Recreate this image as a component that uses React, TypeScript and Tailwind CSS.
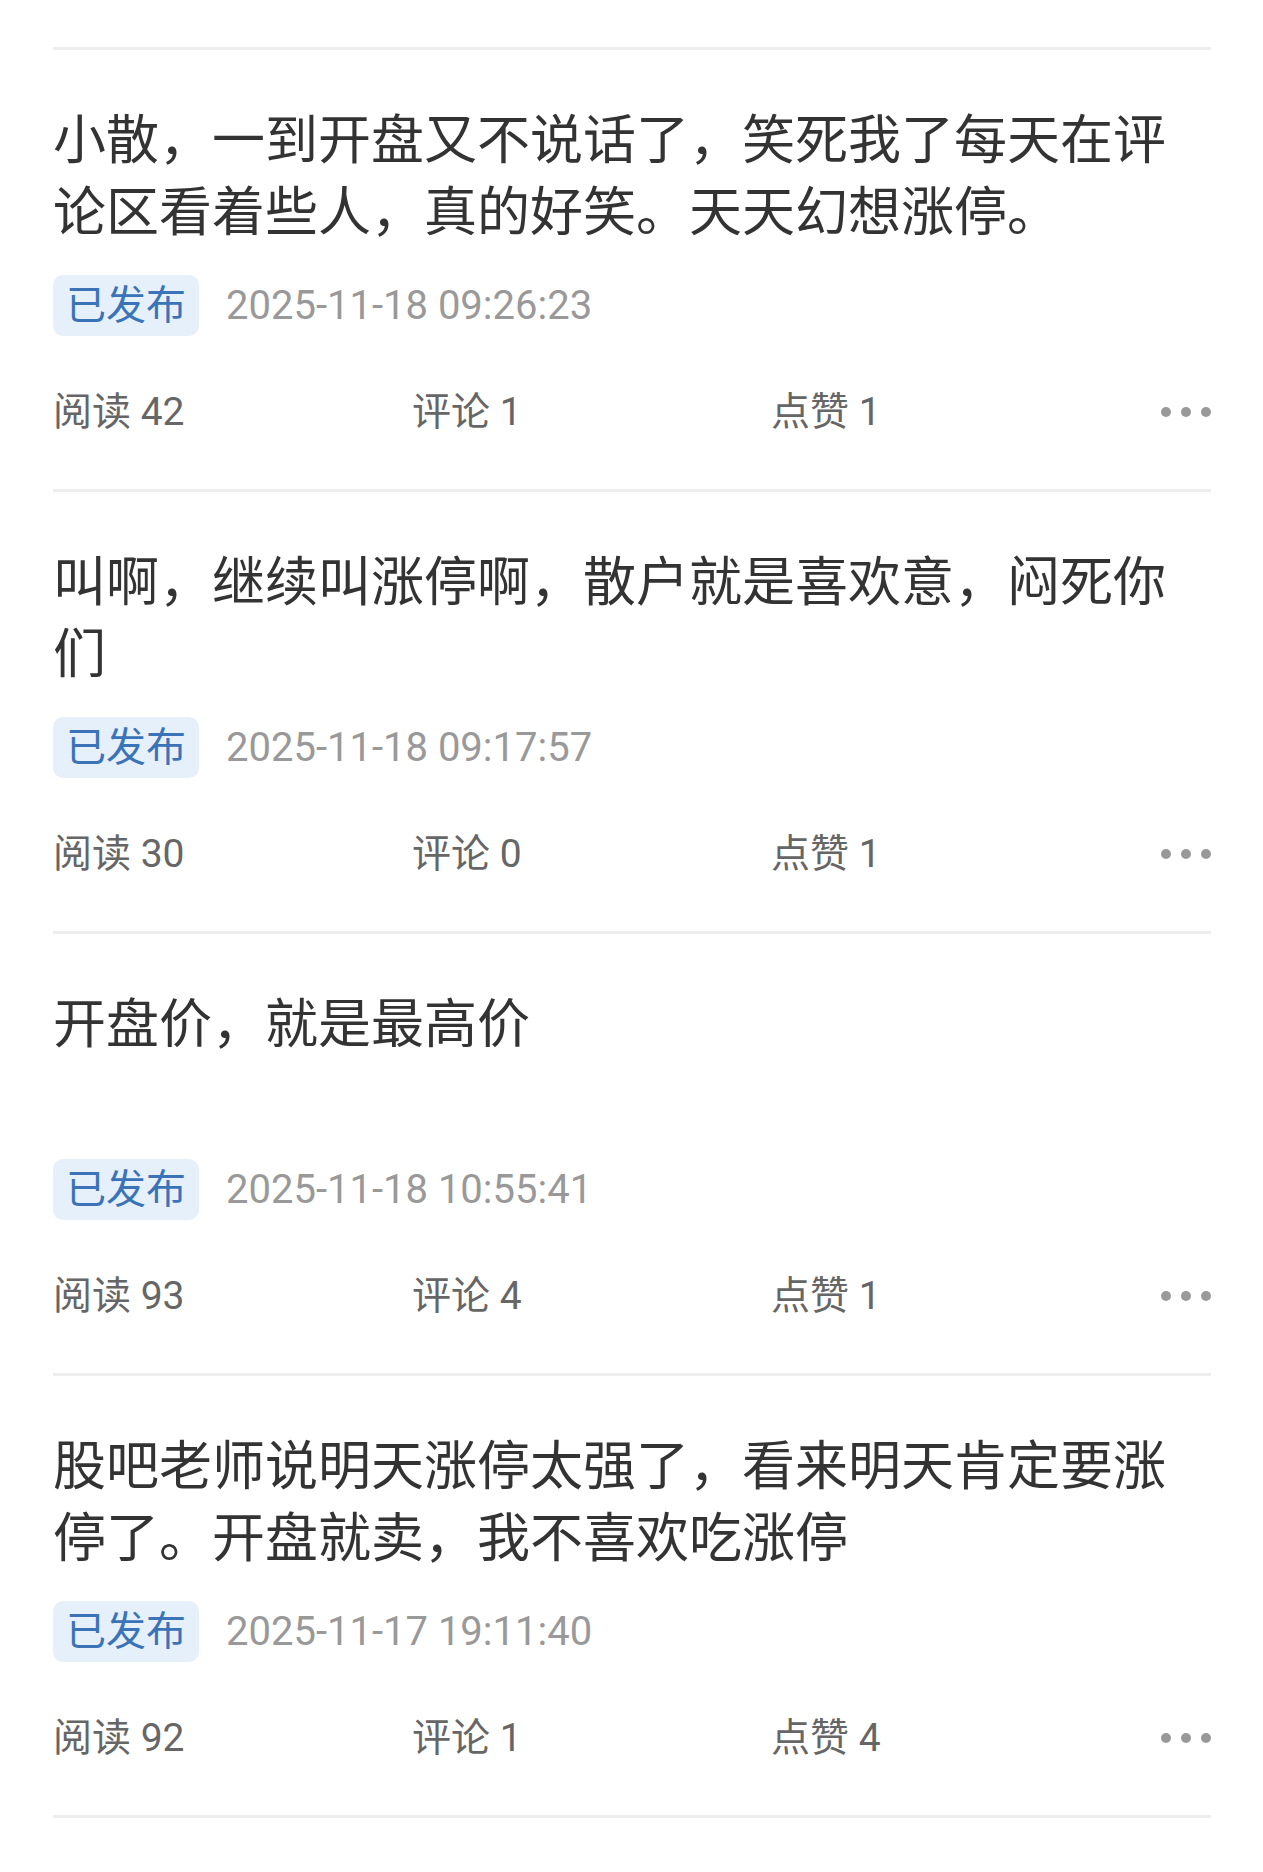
import React from "react";

type Post = {
  title: string;
  date: string;
  reads: number;
  comments: number;
  likes: number;
};

const posts: Post[] = [
  {
    title: "小散，一到开盘又不说话了，笑死我了每天在评论区看着些人，真的好笑。天天幻想涨停。",
    date: "2025-11-18 09:26:23",
    reads: 42,
    comments: 1,
    likes: 1,
  },
  {
    title: "叫啊，继续叫涨停啊，散户就是喜欢意，闷死你们",
    date: "2025-11-18 09:17:57",
    reads: 30,
    comments: 0,
    likes: 1,
  },
  {
    title: "开盘价，就是最高价",
    date: "2025-11-18 10:55:41",
    reads: 93,
    comments: 4,
    likes: 1,
  },
  {
    title: "股吧老师说明天涨停太强了，看来明天肯定要涨停了。开盘就卖，我不喜欢吃涨停",
    date: "2025-11-17 19:11:40",
    reads: 92,
    comments: 1,
    likes: 4,
  },
];

function PostItem({ post }: { post: Post }) {
  return (
    <div>
      <div className="h-[3px] bg-[#eeeeee]" />
      <div className="pt-[55px] pb-[47px]">
        <div className="h-[144px] overflow-hidden text-[53px] leading-[72px] text-[#333333] line-clamp-2">
          {post.title}
        </div>
        <div className="mt-[26px] flex h-[61px] items-center">
          <span className="flex h-[61px] items-center rounded-[10px] bg-[#e6f0fb] px-[13px] text-[40px] leading-none text-[#3a73b8]">
            已发布
          </span>
          <span className="ml-[27px] text-[40px] leading-none text-[#999999]">
            {post.date}
          </span>
        </div>
        <div className="mt-[46px] flex h-[60px] items-center text-[39px] leading-none text-[#666666]">
          <span className="w-[359px]">阅读 {post.reads}</span>
          <span className="w-[359px]">评论 {post.comments}</span>
          <span className="w-[359px]">点赞 {post.likes}</span>
          <div className="flex flex-1 items-center justify-end gap-[10px]">
            <span className="h-[10px] w-[10px] rounded-full bg-[#999999]" />
            <span className="h-[10px] w-[10px] rounded-full bg-[#999999]" />
            <span className="h-[10px] w-[10px] rounded-full bg-[#999999]" />
          </div>
        </div>
      </div>
    </div>
  );
}

export default function App() {
  return (
    <div
      className="min-h-[1872px] w-full bg-white pt-[47px] pl-[53px] pr-[52px]"
      style={{ fontFamily: 'Roboto, "Noto Sans CJK SC", sans-serif' }}
    >
      {posts.map((p, i) => (
        <PostItem key={i} post={p} />
      ))}
      <div className="h-[3px] bg-[#eeeeee]" />
    </div>
  );
}
